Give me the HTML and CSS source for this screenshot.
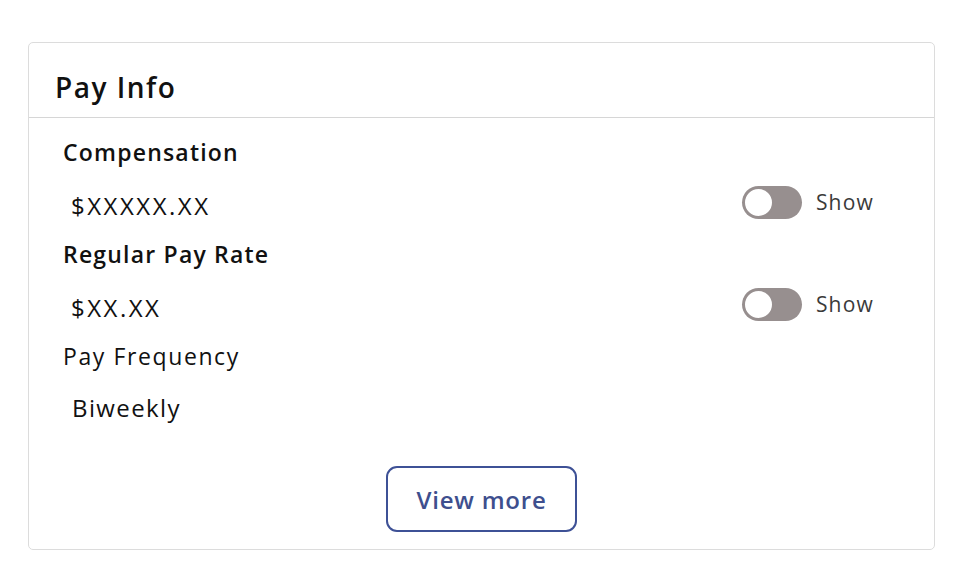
FILE: index.html
```html
<!DOCTYPE html>
<html>
<head>
<meta charset="utf-8">
<link rel="stylesheet" href="styles.css">
</head>
<body>
<div class="card">
  <div class="card-header"><h2 class="title">Pay Info</h2></div>
  <div class="card-body">
    <div class="label bold">Compensation</div>
    <div class="value-row">
      <span class="value money">$XXXXX.XX</span>
      <span class="toggle-group"><span class="toggle"><span class="knob"></span></span><span class="show">Show</span></span>
    </div>
    <div class="label bold">Regular Pay Rate</div>
    <div class="value-row">
      <span class="value money">$XX.XX</span>
      <span class="toggle-group"><span class="toggle"><span class="knob"></span></span><span class="show">Show</span></span>
    </div>
    <div class="label plain">Pay Frequency</div>
    <div class="value-row last">
      <span class="value">Biweekly</span>
    </div>
    <div class="actions"><button class="btn">View more</button></div>
  </div>
</div>
</body>
</html>
```
FILE: styles.css
```css
html, body { margin: 0; padding: 0; background: #fff; }
body { font-family: "Open Sans", "Noto Sans", sans-serif; color: #111; }
.card {
  margin: 42px 0 0 28px;
  width: 905px;
  height: 506px;
  border: 1px solid #dcdcdc;
  border-radius: 5px;
  display: flex;
  flex-direction: column;
}
.card-header {
  height: 74px;
  border-bottom: 1px solid #d6d6d6;
  display: flex;
  align-items: flex-end;
  padding-left: 26px;
}
.title {
  margin: 0 0 11px 0;
  font-size: 28px;
  font-weight: 600;
  line-height: 38px;
  letter-spacing: 1.5px;
}
.card-body {
  padding: 18px 60px 0 34px;
  display: flex;
  flex-direction: column;
}
.label {
  height: 32px;
  line-height: 32px;
  font-size: 23px;
  font-weight: 400;
  letter-spacing: 1.2px;
}
.label.bold { font-weight: 600; }
.label.plain { letter-spacing: 1.6px; }
.value-row {
  height: 32px;
  margin: 22px 0 16px 8px;
  display: flex;
  align-items: center;
  justify-content: space-between;
}
.value-row.last { margin-top: 20px; margin-left: 9px; }
.value { font-size: 24px; line-height: 32px; letter-spacing: 1.4px; }
.value.money { letter-spacing: 2.5px; }
.toggle-group { display: flex; align-items: center; gap: 14px; margin-top: -8px; }
.toggle {
  width: 60px;
  height: 33px;
  border-radius: 17px;
  background: #978f8f;
  display: flex;
  align-items: center;
  padding-left: 1px;
  box-sizing: border-box;
}
.knob {
  width: 27px;
  height: 27px;
  border-radius: 50%;
  background: #fff;
  border: 2px solid #978f8f;
}
.show { font-size: 21px; color: #3a3a3a; letter-spacing: 1.2px; }
.actions { display: flex; justify-content: center; margin: 26px -60px 0 -34px; }
.btn {
  width: 191px;
  height: 66px;
  border: 2px solid #3e5196;
  border-radius: 11px;
  background: #fff;
  color: #3e4f8e;
  font-family: "Open Sans", "Noto Sans", sans-serif;
  font-size: 24px;
  font-weight: 600;
  letter-spacing: 0.8px;
}
```
